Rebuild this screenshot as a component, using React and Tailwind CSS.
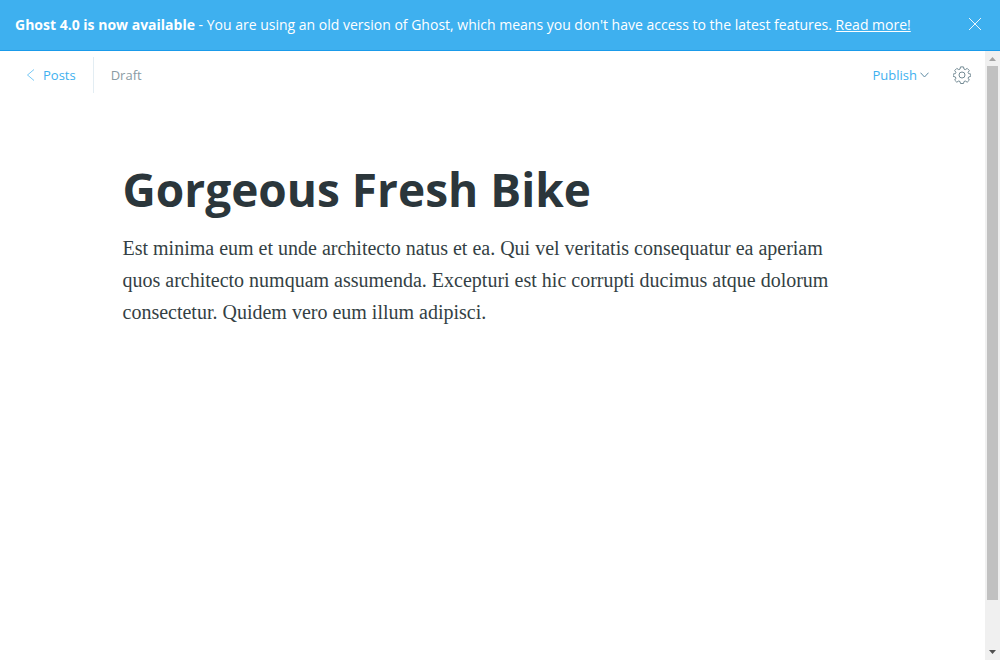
import React from "react";

function Banner() {
  return (
    <aside className="flex shrink-0 items-center justify-between border-b border-[#1a9bea] bg-[#3eb0ef] pl-[15px] pr-[18px] text-sm leading-[50px] text-white">
      <p className="whitespace-nowrap">
        <b className="font-bold">Ghost 4.0 is now available</b> - You are using an old version of Ghost, which means you
        don't have access to the latest features.{" "}
        <a href="#read-more" className="underline">
          Read more!
        </a>
      </p>
      <button type="button" aria-label="Close" className="shrink-0">
        <svg className="mb-[2px] block size-[14px]" viewBox="0 0 14 14" fill="none" stroke="currentColor" strokeWidth="0.9">
          <path d="M1 1l12 12M13 1L1 13" />
        </svg>
      </button>
    </aside>
  );
}

function GearIcon() {
  return (
    <svg className="block size-[18px]" viewBox="0 0 18 18" fill="none" stroke="#738a94" strokeLinejoin="round">
      <circle cx="9" cy="9" r="3" />
      <path d="M7.500 0.900h3l0.500 2.200l1.300 0.500l1.900-1.200l2.100 2.100l-1.200 1.900l0.500 1.200l2.200 0.500v2.200l-2.200 0.700l-0.500 1.200l1.200 1.900l-2.100 2.100l-1.900-1.200l-1.300 0.500l-0.500 2h-3l-0.500-2l-1.300-0.500l-1.900 1.200l-2.100-2.100l1.200-1.900l-0.500-1.200l-2.300-0.700v-2.200l2.300-0.500l0.500-1.200l-1.200-1.900l2.100-2.100l1.900 1.200l1.300-0.500z" />
    </svg>
  );
}

function Toolbar() {
  return (
    <header className="flex items-center justify-between pl-[26px] pr-[14px] pt-[6px] text-[13px]">
      <div className="flex h-9 items-center">
        <a href="#posts" className="flex h-full items-center gap-2 border-r border-[#e3edf3] pr-[17px] text-[#3eb0ef]">
          <svg className="block h-3 w-[9px]" viewBox="0 0 9 12" fill="none" stroke="currentColor" strokeWidth="0.7">
            <path d="M8 0.5L1.5 6L8 11.5" />
          </svg>
          <span className="pt-px">Posts</span>
        </a>
        <span className="pl-[17px] pt-px text-[#8a9ba3]">Draft</span>
      </div>
      <div className="flex items-center gap-6">
        <button type="button" className="flex items-center gap-[3px] text-[#3eb0ef]">
          <span className="pt-px">Publish</span>
          <svg className="block h-[6px] w-[9px]" viewBox="0 0 9 6" fill="none" stroke="#5f8ba3">
            <path d="M0.5 0.7L4.5 5L8.5 0.7" />
          </svg>
        </button>
        <button type="button" aria-label="Settings">
          <GearIcon />
        </button>
      </div>
    </header>
  );
}

function Scrollbar() {
  return (
    <div className="flex w-[15px] shrink-0 flex-col items-center bg-[#f0f0f0]" aria-hidden="true">
      <svg className="block h-[15px] w-[15px] shrink-0" viewBox="0 0 15 15" fill="#a3a3a3">
        <path d="M4 10L7.500 6L11 10z" />
      </svg>
      <div className="flex w-full flex-1 flex-col items-center">
        <div className="h-[92.200%] w-[11px] bg-[#c1c1c1]" />
      </div>
      <svg className="block h-[15px] w-[15px] shrink-0" viewBox="0 0 15 15" fill="#505050">
        <path d="M4 5L7.500 9L11 5z" />
      </svg>
    </div>
  );
}

export default function App() {
  return (
    <div className="flex h-screen flex-col bg-white font-['Open_Sans','Noto_Sans',sans-serif]">
      <Banner />
      <div className="flex min-h-0 flex-1">
        <main className="min-w-0 flex-1">
          <Toolbar />
          <article className="mx-auto max-w-[740px] pt-[66px]">
            <h1 className="text-[46px] leading-[60px] font-bold text-[#2b363b]">Gorgeous Fresh Bike</h1>
            <p className="mt-[13px] font-['Liberation_Serif',serif] text-xl leading-8 text-[#343f44]">
              Est minima eum et unde architecto natus et ea. Qui vel veritatis consequatur ea aperiam quos architecto
              numquam assumenda. Excepturi est hic corrupti ducimus atque dolorum consectetur. Quidem vero eum illum
              adipisci.
            </p>
          </article>
        </main>
        <Scrollbar />
      </div>
    </div>
  );
}
